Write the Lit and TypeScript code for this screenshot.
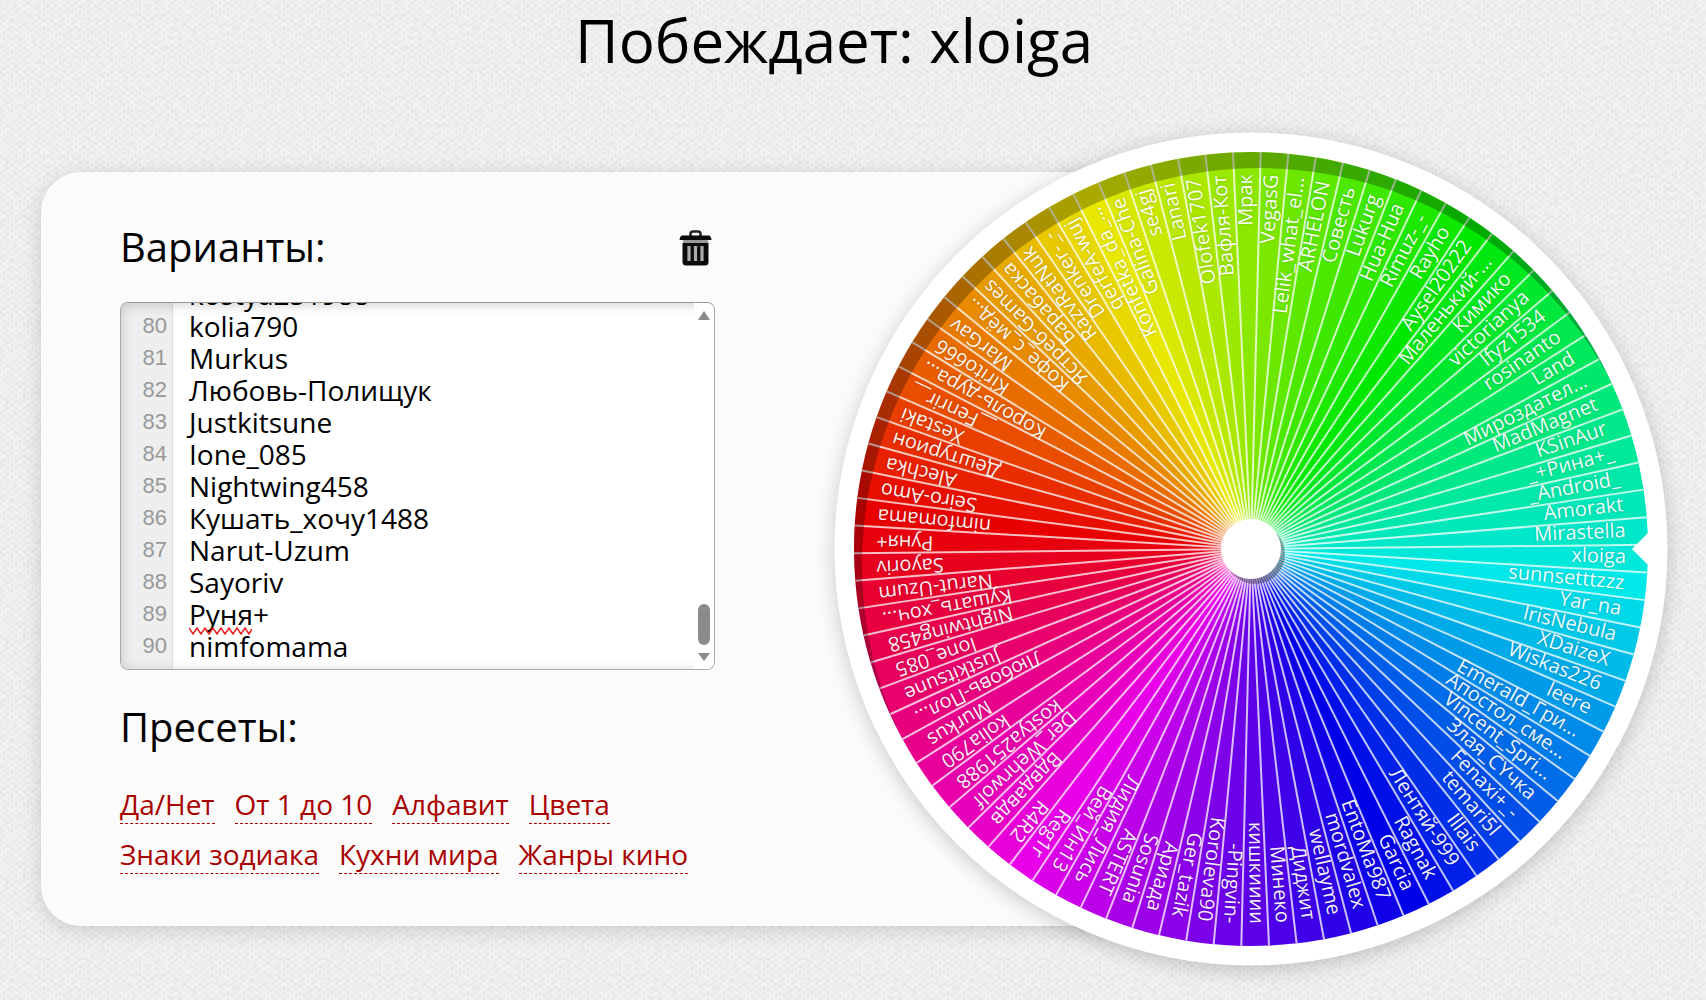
import { LitElement, html, svg, css } from "lit";
import { customElement } from "lit/decorators.js";

const NAMES = [
  "xloiga", "sunnsetttzzz", "Yar_na", "IrisNebula", "XDaizeX", "Wiskas226", "leere", "Emerald_Гри...",
  "Апостол_сме...", "Vincent_Spri...", "Злая_СҮчка", "Fenaxi+_-", "temari5l", "Illais", "Лентяй-999",
  "Ragnak", "Garcia", "EntoMa987", "mordvalex", "wellayme", "Диджит", "Минеко", "кишкииии", "-Pingvin-",
  "Koroleva90", "Ger_tazik", "Ариада", "Sosunia", "ASTERT", "Лидия_Лись", "Вей_Ин13", "Reg1r", "R4R2",
  "Вдвдавдв", "Der_Wehrwolf", "kostya251988", "kolia790", "Murkus", "Любовь-Пол...", "Justkitsune",
  "Ione_085", "Nightwing458", "Кушать_хоч...", "Narut-Uzum", "Sayoriv", "Руня+", "nimfomama", "Seiro-Amo",
  "Alechka", "Дештурион", "Xestaki", "__Fenrir__", "Король-дура...", "Kirito666", "MarGav",
  "Кофе_с_мёд...", "Ястреб-Games", "Барабаска", "RazvRatNuk", "Drenker-_-", "qerfeA-wuj",
  "Konfetka_da_...", "Galina-Che", "se4gj", "Lanari", "Olofek1707", "Вафля-Кот", "Мрак", "VegasG",
  "Lelik_what_el...", "ARHELON", "Совесть", "Lukurg", "Hua-Hua", "Rimuz-_-", "Rayho", "Aysel20222",
  "Маленький-...", "Кимико", "victorianya", "lfyz1534", "rosinanto", "Land", "Мироздател...",
  "MadMagnet", "KSinAur", "_+Рина+_", "_Android_", "Amorakt", "Mirastella",
];

const STEP = 360 / NAMES.length;
const START = -0.6;
const R = 397;
const rad = (deg: number) => (deg * Math.PI) / 180;
const px = (r: number, deg: number) => (r * Math.cos(rad(deg))).toFixed(2);
const py = (r: number, deg: number) => (r * Math.sin(rad(deg))).toFixed(2);

@customElement("prize-wheel")
export class PrizeWheel extends LitElement {
  static styles = css`
    :host { display: block; }
    svg { display: block; width: 100%; height: auto; overflow: visible; }
    .rim { fill: #fff; filter: drop-shadow(0 4px 10px rgba(0, 0, 0, 0.2)); }
    .line { stroke: rgba(255, 255, 255, 0.75); stroke-width: 2; }
    .name {
      font: 20px "Open Sans", "Noto Sans", sans-serif;
      fill: rgba(255, 255, 255, 0.95);
      text-anchor: end;
      text-shadow: 0 0 3px rgba(0, 0, 0, 0.2);
    }
    .shade { fill: rgba(0, 0, 0, 0.27); }
    .hub-shadow { fill: rgba(0, 0, 0, 0.33); }
    .white { fill: #fff; }
  `;

  render() {
    return html`<svg viewBox="-417 -417 834 834" role="img" aria-label="Колесо">
      <circle class="rim" r="416.5"></circle>
      ${NAMES.map((_, i) => {
        const a = START + i * STEP;
        const b = a + STEP + 0.2;
        return svg`<path fill=${`hsl(${(176 + i * STEP) % 360},100%,45.5%)`}
          d=${`M0 0L${px(R, a)} ${py(R, a)}A${R} ${R} 0 0 1 ${px(R, b)} ${py(R, b)}Z`}></path>`;
      })}
      ${NAMES.map((_, i) => {
        const a = START + i * STEP;
        return svg`<line class="line" x1="0" y1="0" x2=${px(R, a)} y2=${py(R, a)}></line>`;
      })}
      ${NAMES.map((name, i) => svg`<text class="name" x="375" y="5"
        transform=${`rotate(${(START + (i + 0.5) * STEP).toFixed(2)})`}>${name}</text>`)}
      <clipPath id="disc"><circle r="397"></circle></clipPath>
      <path class="shade" clip-path="url(#disc)" fill-rule="evenodd"
        d="M-420 -420H420V420H-420ZM-389 16a397 397 0 1 0 794 0a397 397 0 1 0 -794 0Z"></path>
      <path class="white" d="M381 0L402 -21V21Z"></path>
      <circle class="hub-shadow" cx="4" cy="5" r="30"></circle>
      <circle class="white" r="30"></circle>
    </svg>`;
  }
}

const FULL: Record<string, string> = {
  "Любовь-Пол...": "Любовь-Полищук",
  "Кушать_хоч...": "Кушать_хочу1488",
};
const FIRST = NAMES.indexOf("Seiro-Amo");
const OPTIONS = NAMES.map((_, i) => {
  const n = NAMES[(FIRST + i) % NAMES.length];
  return FULL[n] ?? n;
});
const PRESETS = ["Да/Нет", "От 1 до 10", "Алфавит", "Цвета", "Знаки зодиака", "Кухни мира", "Жанры кино"];

@customElement("app-root")
export class AppRoot extends LitElement {
  static styles = css`
    :host {
      display: block;
      box-sizing: border-box;
      min-height: 100vh;
      overflow: hidden;
      color: #000;
      font-family: "Open Sans", "Noto Sans", sans-serif;
      background:
        url("data:image/svg+xml,%3Csvg xmlns='http://www.w3.org/2000/svg' width='240' height='240'%3E%3Cfilter id='n'%3E%3CfeTurbulence type='fractalNoise' baseFrequency='.22' numOctaves='3' stitchTiles='stitch'/%3E%3CfeColorMatrix values='0 0 0 0 0 0 0 0 0 0 0 0 0 0 0 .9 0 0 0 -.36'/%3E%3C/filter%3E%3Crect width='240' height='240' filter='url(%23n)' opacity='.1'/%3E%3C/svg%3E"),
        radial-gradient(circle, rgba(0, 0, 0, 0.04) 0 1px, transparent 1px) 0 0 / 8px 6px,
        radial-gradient(circle, rgba(0, 0, 0, 0.04) 0 1px, transparent 1px) 4px 3px / 8px 6px,
        #f2f2f2;
    }
    .title { margin: 0; padding: 0 38px 4px 0; text-align: center; font-size: 60px; line-height: 80px; font-weight: 400; }
    .main { display: grid; grid-template-columns: minmax(700px, 1fr) 834px; align-items: center; padding: 48px 38px 0 41px; }
    .panel {
      grid-column: 1 / 3; grid-row: 1;
      box-sizing: border-box;
      margin-right: 400px;
      padding: 47px 79px 52px;
      border-radius: 40px;
      background: #fbfbfb;
      box-shadow: 0 4px 20px rgba(0, 0, 0, 0.15);
    }
    .wheel { grid-column: 2; grid-row: 1; }
    .column { width: 595px; }
    .head { display: flex; justify-content: space-between; align-items: center; }
    h2 { margin: 0; font-size: 40px; line-height: 56px; font-weight: 400; }
    .trash { border: 0; padding: 2px 0 0; margin-right: 3px; background: none; display: block; }
    .trash svg { display: block; }
    .box {
      position: relative;
      display: flex;
      height: 366px;
      margin-top: 27px;
      border: 1px solid #aaa;
      border-top-color: #999;
      border-radius: 8px;
      background: #fff;
      overflow: hidden;
    }
    .gutter {
      display: flex; flex-direction: column; justify-content: flex-end;
      box-sizing: border-box;
      flex: 0 0 52px;
      padding: 0 5px 7px 0;
      text-align: right;
      background: #eee;
      border-right: 1px solid #ddd;
      color: #999;
      font: 22px/32px "Liberation Sans", Arial, sans-serif;
    }
    .text {
      flex: 1;
      min-width: 0;
      box-sizing: border-box;
      border: 0;
      outline: 0;
      resize: none;
      padding: 0 16px 7px;
      background: none;
      color: #000;
      font: 28px/32px "Open Sans", "Noto Sans", sans-serif;
      scrollbar-width: none;
      white-space: pre;
    }
    .bar {
      position: relative; z-index: 1;
      flex: 0 0 20px;
      display: flex; flex-direction: column; align-items: center;
      padding: 8px 0;
      background: #fff;
    }
    .thumb { width: 12px; height: 41px; margin: auto 0 8px; border-radius: 6px; background: #8b8b8b; }
    .inner {
      position: absolute; inset: 0; pointer-events: none; border-radius: 7px;
      box-shadow: inset 0 2px 12px rgba(0, 0, 0, 0.18);
    }
    .squiggle { position: absolute; left: 68px; bottom: 34px; pointer-events: none; }
    .presets { margin-top: 29px; }
    .links { display: flex; flex-wrap: wrap; gap: 11px 20px; margin-top: 30px; }
    .links a {
      color: #a90000;
      font-size: 28px;
      line-height: 38px;
      text-decoration: none;
      border-bottom: 1px dashed #a90000;
    }
  `;

  firstUpdated() {
    const t = this.renderRoot.querySelector("textarea");
    if (t) t.scrollTop = t.scrollHeight;
  }

  render() {
    return html`
      <h1 class="title">Побеждает: xloiga</h1>
      <div class="main">
        <section class="panel">
          <div class="column">
            <div class="head">
              <h2><label for="options">Варианты:</label></h2>
              <button class="trash" type="button" aria-label="Очистить">
                <svg width="33" height="36" viewBox="0 0 33 36">
                  <path d="M11.5 6V4Q11.500 1.500 14 1.500H19Q21.500 1.500 21.500 4V6" fill="none" stroke="#222" stroke-width="2.500"></path>
                  <path d="M3 5.500H30Q32 6 32.500 10H.5Q1 6 3 5.500Z" fill="#0a0a0a"></path>
                  <path d="M4 10H29V13H4Z" fill="#999"></path>
                  <path d="M3.500 13H29.500V32Q29.500 35.500 26 35.500H7Q3.500 35.500 3.500 32Z" fill="#0a0a0a"></path>
                  <path d="M10 16V31M16.500 16V31M23 16V31" stroke="#aaa" stroke-width="3.200"></path>
                </svg>
              </button>
            </div>
            <div class="box">
              <div class="gutter" aria-hidden="true">
                ${OPTIONS.slice(78).map((_, i) => html`<div>${i + 79}</div>`)}
              </div>
              <textarea id="options" class="text" wrap="off" spellcheck="false" .value=${OPTIONS.join("\n")}></textarea>
              <div class="bar" aria-hidden="true">
                <svg width="12" height="9"><path d="M0 9L6 0L12 9Z" fill="#8b8b8b"></path></svg>
                <div class="thumb"></div>
                <svg width="12" height="8"><path d="M0 0L6 8L12 0Z" fill="#8b8b8b"></path></svg>
              </div>
              <svg class="squiggle" width="63" height="8"><path d="M0 1L4 7L8 1L12 7L16 1L20 7L24 1L28 7L32 1L36 7L40 1L44 7L48 1L52 7L56 1L60 7L63 2" fill="none" stroke="#e22" stroke-width="1.5"></path></svg>
              <div class="inner"></div>
            </div>
            <h2 class="presets">Пресеты:</h2>
            <nav class="links">
              ${PRESETS.map((p) => html`<a href="#">${p}</a>`)}
            </nav>
          </div>
        </section>
        <prize-wheel class="wheel"></prize-wheel>
      </div>
    `;
  }
}
